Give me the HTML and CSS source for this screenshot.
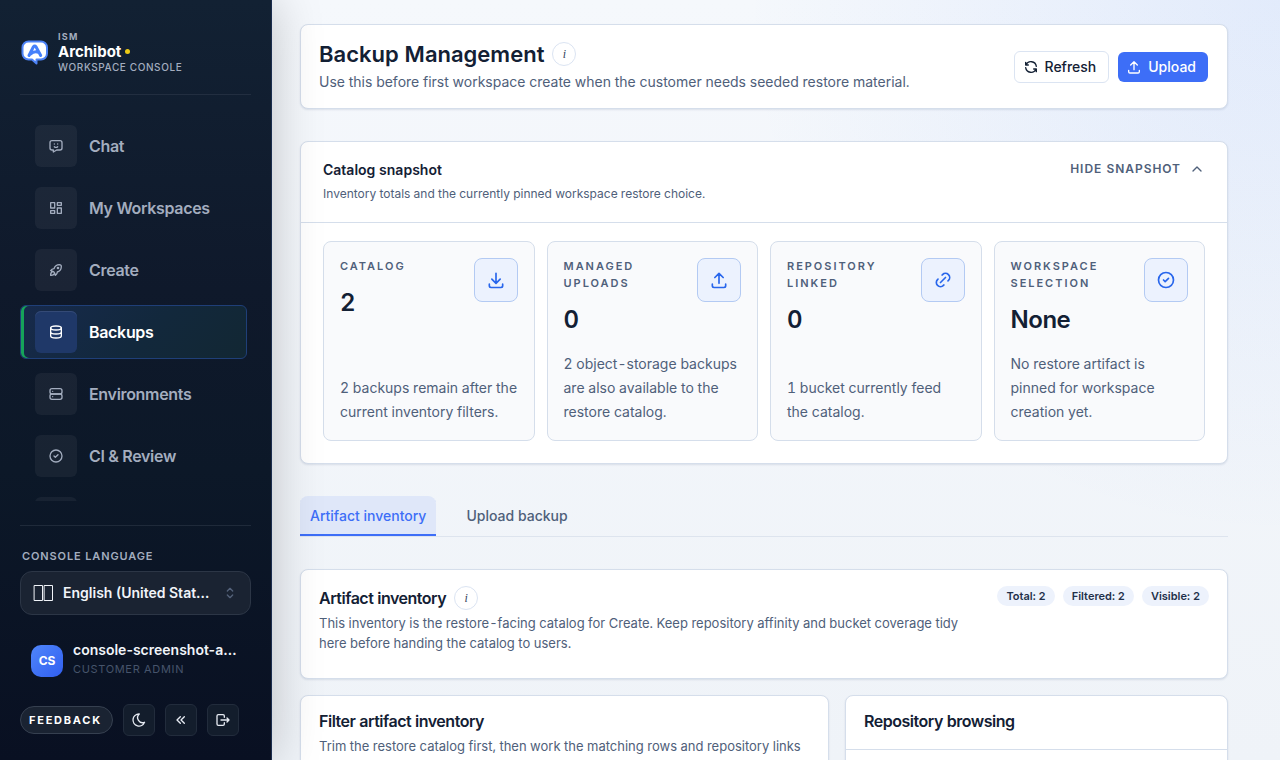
FILE: index.html
```
<!DOCTYPE html>
<html lang="en">

<head>
    <meta charset="UTF-8">
    <meta name="viewport" content="width=device-width, initial-scale=1">
    <title>Backup Management</title>
    <link rel="stylesheet" href="styles.css">
</head>

<body>
    <div class="app">
        <aside class="sidebar">
            <div class="brand">
                <svg class="logo" viewBox="0 0 28 28" aria-hidden="true">
                    <path class="bubble" d="M7.500 3.500h12.500a6 6 0 0 1 6 6v6a6 6 0 0 1-6 6h-4.500v4l-4.500-4h-3.500a6 6 0 0 1-6-6v-6a6 6 0 0 1 6-6z" />
                    <path class="mark" d="M8 17.500l4.300-8.500q1.400-1.800 2.800 0l4.600 8.500M9 16.500q4.500-4.200 8.500-2.200" />
                </svg>
                <div class="brand-txt">
                    <span class="brand-top">ISM</span>
                    <span class="brand-name">Archibot<i class="dot"></i></span>
                    <span class="brand-sub">WORKSPACE CONSOLE</span>
                </div>
            </div>

            <nav class="menu">
                <a href="#chat">
                    <span class="tile"><svg viewBox="0 0 24 24"><path d="M18 4a3 3 0 0 1 3 3v8a3 3 0 0 1-3 3h-5l-5 3v-3h-2a3 3 0 0 1-3-3v-8a3 3 0 0 1 3-3zM9.500 9h.01M14.500 9h.01M9.500 13a3.500 3.500 0 0 0 5 0" /></svg></span>
                    Chat
                </a>
                <a href="#workspaces">
                    <span class="tile"><svg viewBox="0 0 24 24"><path d="M4 4h6v8h-6zM4 16h6v4h-6zM14 12h6v8h-6zM14 4h6v4h-6z" /></svg></span>
                    My Workspaces
                </a>
                <a href="#create">
                    <span class="tile"><svg viewBox="0 0 24 24"><path d="M4 13a8 8 0 0 1 7 7a6 6 0 0 0 3-5a9 9 0 0 0 6-8a3 3 0 0 0-3-3a9 9 0 0 0-8 6a6 6 0 0 0-5 3M7 14a6 6 0 0 0-3 6a6 6 0 0 0 6-3" /><circle cx="15" cy="9" r="1" /></svg></span>
                    Create
                </a>
                <a href="#backups" class="active" aria-current="page">
                    <span class="tile"><svg viewBox="0 0 24 24"><ellipse cx="12" cy="6" rx="8" ry="3" /><path d="M4 6v6a8 3 0 0 0 16 0v-6M4 12v6a8 3 0 0 0 16 0v-6" /></svg></span>
                    Backups
                </a>
                <a href="#environments">
                    <span class="tile"><svg viewBox="0 0 24 24"><rect x="3" y="4" width="18" height="8" rx="3" /><rect x="3" y="12" width="18" height="8" rx="3" /><path d="M7 8v.01M7 16v.01" /></svg></span>
                    Environments
                </a>
                <a href="#review">
                    <span class="tile"><svg viewBox="0 0 24 24"><circle cx="12" cy="12" r="9" /><path d="M9 12l2 2l4-4" /></svg></span>
                    CI &amp; Review
                </a>
                <a href="#settings" aria-label="Settings">
                    <span class="tile"></span>
                </a>
            </nav>

            <div class="side-bottom">
                <label class="lang-label" for="lang">CONSOLE LANGUAGE</label>
                <div class="lang">
                    <svg class="flag" viewBox="0 0 21 16" aria-hidden="true"><path d="M1.500 .5h8v15h-8zM11.500 .5h8v15h-8z" /></svg>
                    <select id="lang">
                        <option>English (United States)</option>
                    </select>
                    <svg viewBox="0 0 24 24"><path d="M8 9l4-4l4 4M16 15l-4 4l-4-4" /></svg>
                </div>

                <div class="user">
                    <span class="avatar">CS</span>
                    <div class="user-txt">
                        <span class="user-name">console-screenshot-admin</span>
                        <span class="user-role">CUSTOMER ADMIN</span>
                    </div>
                </div>

                <div class="tools">
                    <button class="feedback">FEEDBACK</button>
                    <button class="tool" aria-label="Dark mode"><svg viewBox="0 0 24 24"><path d="M12 3h.393a7.500 7.500 0 0 0 7.920 12.446a9 9 0 1 1-8.313-12.454z" /></svg></button>
                    <button class="tool" aria-label="Collapse"><svg viewBox="0 0 24 24"><path d="M11 7l-5 5l5 5M17 7l-5 5l5 5" /></svg></button>
                    <button class="tool" aria-label="Sign out"><svg viewBox="0 0 24 24"><path d="M14 8v-2a2 2 0 0 0-2-2h-7a2 2 0 0 0-2 2v12a2 2 0 0 0 2 2h7a2 2 0 0 0 2-2v-2M9 12h12l-3-3M18 15l3-3" /></svg></button>
                </div>
            </div>
        </aside>

        <main>
            <header class="card page-head">
                <div>
                    <div class="title-row">
                        <h1>Backup Management</h1>
                        <button class="info" aria-label="About backups">i</button>
                    </div>
                    <p>Use this before first workspace create when the customer needs seeded restore material.</p>
                </div>
                <div class="actions">
                    <button class="btn"><svg viewBox="0 0 24 24"><path d="M20 11a8.100 8.100 0 0 0-15.500-2m-.5-4v4h4M4 13a8.100 8.100 0 0 0 15.500 2m.5 4v-4h-4" /></svg>Refresh</button>
                    <button class="btn primary"><svg viewBox="0 0 24 24"><path d="M4 17v2a2 2 0 0 0 2 2h12a2 2 0 0 0 2-2v-2M7 9l5-5l5 5M12 4v12" /></svg>Upload</button>
                </div>
            </header>

            <section class="card snapshot">
                <div class="snapshot-head">
                    <div>
                        <h2>Catalog snapshot</h2>
                        <p>Inventory totals and the currently pinned workspace restore choice.</p>
                    </div>
                    <button class="toggle">HIDE SNAPSHOT<svg viewBox="0 0 24 24"><path d="M6 15l6-6l6 6" /></svg></button>
                </div>
                <div class="stats">
                    <article class="stat">
                        <div class="stat-top">
                            <div>
                                <h3>CATALOG</h3>
                                <strong>2</strong>
                            </div>
                            <span class="stat-icon"><svg viewBox="0 0 24 24"><path d="M4 17v2a2 2 0 0 0 2 2h12a2 2 0 0 0 2-2v-2M7 11l5 5l5-5M12 4v12" /></svg></span>
                        </div>
                        <p>2 backups remain after the current inventory filters.</p>
                    </article>
                    <article class="stat">
                        <div class="stat-top">
                            <div>
                                <h3>MANAGED UPLOADS</h3>
                                <strong>0</strong>
                            </div>
                            <span class="stat-icon"><svg viewBox="0 0 24 24"><path d="M4 17v2a2 2 0 0 0 2 2h12a2 2 0 0 0 2-2v-2M7 9l5-5l5 5M12 4v12" /></svg></span>
                        </div>
                        <p>2 object-storage backups are also available to the restore catalog.</p>
                    </article>
                    <article class="stat">
                        <div class="stat-top">
                            <div>
                                <h3>REPOSITORY LINKED</h3>
                                <strong>0</strong>
                            </div>
                            <span class="stat-icon"><svg viewBox="0 0 24 24"><path d="M9 15l6-6M11 6l.463-.536a5 5 0 0 1 7.071 7.072l-.534.464M13 18l-.397.534a5.068 5.068 0 0 1-7.127 0a4.972 4.972 0 0 1 0-7.071l.524-.463" /></svg></span>
                        </div>
                        <p>1 bucket currently feed the&nbsp;catalog.</p>
                    </article>
                    <article class="stat">
                        <div class="stat-top">
                            <div>
                                <h3>WORKSPACE SELECTION</h3>
                                <strong>None</strong>
                            </div>
                            <span class="stat-icon"><svg viewBox="0 0 24 24"><circle cx="12" cy="12" r="9" /><path d="M9 12l2 2l4-4" /></svg></span>
                        </div>
                        <p>No restore artifact is pinned for workspace creation yet.</p>
                    </article>
                </div>
            </section>

            <div class="tabs" role="tablist">
                <button class="tab valgt" role="tab" aria-selected="true">Artifact inventory</button>
                <button class="tab" role="tab" aria-selected="false">Upload backup</button>
            </div>

            <section class="card inventory">
                <div class="inventory-txt">
                    <div class="title-row">
                        <h2>Artifact inventory</h2>
                        <button class="info" aria-label="About the inventory">i</button>
                    </div>
                    <p>This inventory is the restore-facing catalog for Create. Keep repository affinity and bucket coverage tidy here before handing the catalog to users.</p>
                </div>
                <div class="pills">
                    <span>Total: 2</span>
                    <span>Filtered: 2</span>
                    <span>Visible: 2</span>
                </div>
            </section>

            <div class="columns">
                <section class="card filter">
                    <h2>Filter artifact inventory</h2>
                    <p>Trim the restore catalog first, then work the matching rows and repository links</p>
                </section>
                <section class="card repo">
                    <h2>Repository browsing</h2>
                    <div class="repo-body"></div>
                </section>
            </div>
        </main>
    </div>
</body>

</html>
```

FILE: styles.css
```
* {
    box-sizing: border-box;
}

body {
    margin: 0;
    font-family: Inter, "Liberation Sans", sans-serif;
    font-size: 14px;
    line-height: 20px;
    font-feature-settings: "tnum";
    color: #132034;
}

h1,
h2,
h3,
p {
    margin: 0;
}

h1,
h2 {
    font-weight: 600;
    color: #132034;
}

h2 {
    font-size: 16px;
    line-height: 24px;
    letter-spacing: -0.03em;
}

p {
    color: #4f607a;
}

button,
select {
    font: inherit;
    color: inherit;
    background: none;
    border: 0;
    padding: 0;
    margin: 0;
    cursor: pointer;
}

svg {
    display: block;
    flex: none;
    width: 16px;
    height: 16px;
    fill: none;
    stroke: currentColor;
    stroke-width: 2;
    stroke-linecap: round;
    stroke-linejoin: round;
}

.app {
    display: grid;
    grid-template-columns: 272px minmax(0, 1fr);
    height: 100vh;
    overflow: hidden;
    background: radial-gradient(circle at top right, rgba(59, 120, 246, .1), transparent 36%), linear-gradient(180deg, #f5f8fc, #eff3f8);
}

/* sidebar */

.sidebar {
    z-index: 1;
    display: flex;
    flex-direction: column;
    min-height: 0;
    padding: 28px 20px 24px;
    background: linear-gradient(180deg, #122133 0%, #0f192b 38%, #0c1828 62%, #091022 100%);
    border-right: 1px solid #1b2d4e;
    box-shadow: 0 0 48px rgba(0, 0, 0, .22);
    color: #a3adbf;
    font-feature-settings: normal;
}

.brand {
    display: flex;
    align-items: center;
    gap: 9px;
    padding: 2px 0 20px 1px;
    border-bottom: 1px solid #222e40;
}

.logo {
    width: 28px;
    height: 28px;
}

.bubble {
    fill: #fff;
    stroke: #4d83f7;
    stroke-width: 2;
}

.mark {
    stroke: #4580fb;
    stroke-width: 3;
}

.brand-txt {
    display: flex;
    flex-direction: column;
}

.brand-top {
    font-size: 9px;
    line-height: 13px;
    font-weight: 700;
    letter-spacing: 0.14em;
}

.brand-name {
    display: flex;
    align-items: center;
    gap: 4px;
    font-size: 15px;
    line-height: 17px;
    font-weight: 700;
    color: #fff;
}

.dot {
    width: 5px;
    height: 5px;
    border-radius: 50%;
    background: #eecb15;
}

.brand-sub {
    font-size: 10px;
    line-height: 14px;
    font-weight: 500;
    letter-spacing: 0.06em;
}

.menu {
    flex: 1;
    min-height: 0;
    display: flex;
    flex-direction: column;
    gap: 8px;
    margin: 24px 4px 24px 0;
    overflow: hidden;
}

.menu a {
    flex: none;
    display: flex;
    align-items: center;
    gap: 12px;
    height: 54px;
    padding: 0 14px;
    border: 1px solid transparent;
    border-radius: 6px;
    font-size: 16px;
    font-weight: 600;
    letter-spacing: -0.02em;
    color: #a3adbf;
    text-decoration: none;
}

.tile {
    display: flex;
    align-items: center;
    justify-content: center;
    width: 42px;
    height: 42px;
    border-radius: 6px;
    background: rgba(255, 255, 255, .05);
}

.menu .active {
    color: #fff;
    border-color: #1f3f78;
    background: linear-gradient(135deg, #172a4c, #12283c 55%, #122733);
    box-shadow: inset 3px 0 0 #16a35a;
}

.active .tile {
    background: #1f3868;
    box-shadow: inset 0 1px 0 #344a76;
}

.side-bottom {
    border-top: 1px solid #1f2a3a;
    padding-top: 20px;
}

.lang-label {
    display: block;
    padding-left: 2px;
    font-size: 11px;
    font-weight: 600;
    letter-spacing: 0.08em;
}

.lang {
    display: flex;
    align-items: center;
    height: 44px;
    margin-top: 5px;
    padding: 0 12px;
    border: 1px solid #2c3646;
    border-radius: 12px;
    background: #1a2332;
}

.lang svg {
    color: #54627a;
}

.lang .flag {
    width: 21px;
    margin-right: 9px;
    color: #f1f4f9;
    stroke-width: 1;
    stroke-linejoin: miter;
}

.lang select {
    flex: 1;
    min-width: 0;
    margin-right: 10px;
    appearance: none;
    font-weight: 600;
    color: #f1f4f9;
    text-overflow: ellipsis;
}

.user {
    display: flex;
    align-items: flex-end;
    gap: 10px;
    margin: 24px 0 27px;
    padding: 0 11px;
}

.avatar {
    display: flex;
    align-items: center;
    justify-content: center;
    flex: none;
    width: 32px;
    height: 32px;
    border-radius: 10px;
    background: linear-gradient(135deg, #4f86fb, #315ff0);
    color: #fff;
    font-size: 12px;
    font-weight: 700;
}

.user-txt {
    display: flex;
    flex-direction: column;
    min-width: 0;
}

.user-name {
    overflow: hidden;
    white-space: nowrap;
    text-overflow: ellipsis;
    line-height: 22px;
    font-weight: 600;
    color: #f1f4f9;
}

.user-role {
    font-size: 11px;
    line-height: 16px;
    letter-spacing: 0.06em;
    color: #46546b;
}

.tools {
    display: flex;
    align-items: center;
    gap: 10px;
}

.feedback {
    height: 28px;
    padding: 0 10px 0 8px;
    border: 1px solid #364050;
    border-radius: 14px;
    background: #1a2332;
    color: #fff;
    font-size: 11px;
    font-weight: 700;
    letter-spacing: 0.16em;
}

.tool {
    display: flex;
    align-items: center;
    justify-content: center;
    width: 32px;
    height: 32px;
    border: 1px solid #222c3c;
    border-radius: 6px;
    background: #131d2c;
    color: #e6eaf2;
}

/* main */

main {
    display: flex;
    flex-direction: column;
    gap: 32px;
    min-width: 0;
    padding: 24px 52px 24px 28px;
    overflow-y: auto;
    scrollbar-width: none;
}

main > * {
    flex: none;
}

.card {
    background: #fff;
    border: 1px solid #d5deeb;
    border-radius: 8px;
    box-shadow: 0 1px 2px rgba(30, 60, 110, .12);
}

.page-head {
    display: flex;
    align-items: center;
    justify-content: space-between;
    gap: 24px;
    padding: 15px 19px 14px 18px;
}

.title-row {
    display: flex;
    align-items: center;
    gap: 8px;
}

h1 {
    font-size: 22px;
    line-height: 28px;
}

.page-head p {
    margin-top: 2px;
    line-height: 24px;
}

.info {
    width: 24px;
    height: 24px;
    border: 1px solid #dbe4f2;
    border-radius: 50%;
    font-family: "Liberation Serif", serif;
    font-size: 12px;
    font-style: italic;
    font-weight: 400;
    line-height: 22px;
    color: #33435c;
}

.actions {
    display: flex;
    align-items: center;
    gap: 9px;
}

.btn {
    display: flex;
    align-items: center;
    gap: 6px;
    height: 32px;
    padding: 0 12px 0 8px;
    border: 1px solid #dbe4f2;
    border-radius: 6px;
    font-weight: 500;
}

.primary {
    height: 30px;
    border: 0;
    background: #3d6ef7;
    color: #fff;
}

.snapshot-head {
    display: flex;
    justify-content: space-between;
    align-items: flex-start;
    padding: 17px 22px;
    border-bottom: 1px solid #d5deeb;
}

.snapshot-head h2 {
    font-size: 14px;
    line-height: 22px;
    letter-spacing: 0;
}

.snapshot-head p {
    margin-top: 2px;
    font-size: 12px;
    line-height: 22px;
}

.toggle {
    display: flex;
    align-items: center;
    gap: 8px;
    font-size: 12px;
    font-weight: 600;
    letter-spacing: 0.08em;
    color: #4f607a;
}

.stats {
    display: grid;
    grid-template-columns: repeat(4, 1fr);
    gap: 12px;
    padding: 18px 22px 22px;
}

.stat {
    display: flex;
    flex-direction: column;
    justify-content: space-between;
    gap: 16px;
    padding: 16px;
    border: 1px solid #d5deeb;
    border-radius: 8px;
    background: #f9fafc;
}

.stat-top {
    display: flex;
    justify-content: space-between;
    align-items: flex-start;
    gap: 12px;
}

.stat h3 {
    font-size: 11px;
    line-height: 17px;
    font-weight: 600;
    letter-spacing: 0.18em;
    color: #4f607a;
}

.stat strong {
    display: block;
    margin-top: 12px;
    font-size: 24px;
    line-height: 32px;
    font-weight: 600;
    letter-spacing: -0.02em;
    color: #132034;
}

.stat p {
    line-height: 24px;
}

.stat-icon {
    display: flex;
    align-items: center;
    justify-content: center;
    flex: none;
    width: 44px;
    height: 44px;
    border: 1px solid #b3caf3;
    border-radius: 8px;
    background: #ecf2fe;
    color: #2866ec;
}

.stat-icon svg {
    width: 20px;
    height: 20px;
}

.tabs {
    display: flex;
    gap: 20px;
    border-bottom: 1px solid #dde4ee;
}

.tab {
    height: 40px;
    padding: 0 10px;
    border-radius: 8px 8px 0 0;
    font-weight: 500;
    color: #4f607a;
}

.valgt {
    background: #dfe7f9;
    box-shadow: inset 0 -2px 0 #3d6ef7;
    color: #3d6ef7;
}

.inventory {
    display: flex;
    justify-content: space-between;
    align-items: flex-start;
    padding: 16px 18px 25px;
}

.inventory-txt {
    max-width: 660px;
}

.inventory p,
.filter p {
    margin-top: 3px;
    font-size: 13px;
    line-height: 20px;
}

.pills {
    display: flex;
    gap: 8px;
}

.pills span {
    padding: 0 9px;
    border-radius: 10px;
    background: #edf2fc;
    font-size: 11px;
    font-weight: 600;
    color: #22304a;
}

.columns {
    display: grid;
    grid-template-columns: 529fr 383fr;
    gap: 16px;
    margin-top: -16px;
}

.filter {
    padding: 13px 18px 24px;
}

.repo h2 {
    padding: 13px 18px 16px;
    border-bottom: 1px solid #d5deeb;
}

.repo-body {
    min-height: 80px;
}
```
